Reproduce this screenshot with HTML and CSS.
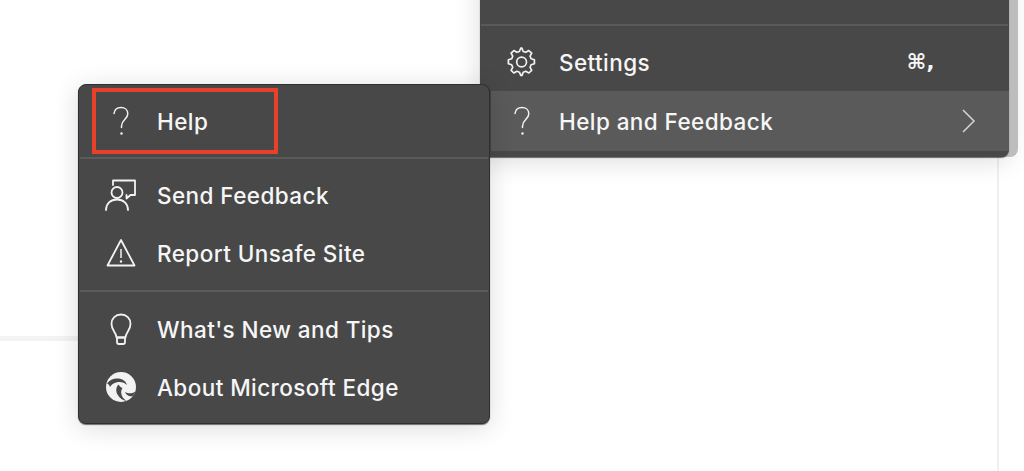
FILE: index.html
```html
<!DOCTYPE html>
<html lang="en">
<head>
<meta charset="utf-8">
<title>Help and Feedback menu</title>
<link rel="stylesheet" href="styles.css">
</head>
<body>
<div class="page-line"></div>
<div class="side-line"></div>

<div class="menu menu-main">
  <div class="group group-top"></div>
  <div class="divider"></div>
  <div class="group group-main">
    <div class="item">
      <svg class="icon" viewBox="0 0 34 34"><g fill="none" stroke="currentColor" stroke-width="1.7" stroke-linecap="round" stroke-linejoin="round"><path d="M17 3.200l1.200 3.300 2.600.8 3-1.700 2.900 2.600-1.600 3 1 2.500 3.300 1.100v3.900l-3.300 1.100-1 2.500 1.600 3-2.900 2.700-3-1.700-2.600.9-1.200 3.200h-1.200l-1.400-3.200-2.500-.9-3 1.700-2.800-2.700 1.600-3-1-2.500-3.300-1.100v-3.900l3.300-1.100 1-2.500-1.600-3 2.800-2.600 3 1.700 2.500-.8 1.400-3.300z"/><circle cx="16.600" cy="17" r="4.900"/></g></svg>
      <span class="label">Settings</span>
      <span class="shortcut">⌘,</span>
    </div>
    <div class="item item-active">
      <svg class="icon" viewBox="0 0 34 34"><g fill="none" stroke="currentColor" stroke-width="1.5" stroke-linecap="round"><path d="M10 9.500C10.500 5.500 13.500 3.500 17 3.500c4 0 6.800 2.600 6.800 6.200 0 5.800-6.300 6-6.300 12.300v1.500"/></g><circle cx="17.500" cy="29.500" r="1.200" fill="currentColor"/></svg>
      <span class="label">Help and Feedback</span>
      <svg class="chevron" viewBox="0 0 16 26"><path d="M2 2l11 11L2 24" fill="none" stroke="currentColor" stroke-width="1.5"/></svg>
    </div>
  </div>
</div>

<div class="menu menu-sub">
  <div class="group">
    <div class="item">
      <svg class="icon" viewBox="0 0 34 34"><g fill="none" stroke="currentColor" stroke-width="1.5" stroke-linecap="round"><path d="M10 9.500C10.500 5.500 13.500 3.500 17 3.500c4 0 6.800 2.600 6.800 6.200 0 5.800-6.300 6-6.300 12.300v1.500"/></g><circle cx="17.500" cy="29.500" r="1.200" fill="currentColor"/></svg>
      <span class="label">Help</span>
    </div>
  </div>
  <div class="divider"></div>
  <div class="group group-mid">
    <div class="item">
      <svg class="icon" viewBox="0 0 34 34"><g fill="none" stroke="currentColor" stroke-width="1.8" stroke-linecap="round" stroke-linejoin="round"><path d="M9 7V2.500h22V17h-4.500l-4 3.500V17"/><circle cx="13" cy="14.500" r="5.500"/><path d="M2 32c0-6.500 4.500-10.500 11-10.500S24 25.500 24 32"/></g></svg>
      <span class="label">Send Feedback</span>
    </div>
    <div class="item">
      <svg class="icon" viewBox="0 0 34 34"><g fill="none" stroke="currentColor" stroke-width="1.8" stroke-linejoin="round"><path d="M17 4L3.500 29.500h27z"/></g><path d="M17 13v9" stroke="currentColor" stroke-width="1.500"/><circle cx="17" cy="25.500" r="1.200" fill="currentColor"/></svg>
      <span class="label">Report Unsafe Site</span>
    </div>
  </div>
  <div class="divider"></div>
  <div class="group group-last">
    <div class="item">
      <svg class="icon" viewBox="0 0 34 34"><g fill="none" stroke="currentColor" stroke-width="1.800" stroke-linejoin="round" stroke-linecap="round"><path d="M12.500 25.500c0-5-5-7-5-13.500C7.500 6.500 11.500 2.500 17 2.500S26.500 6.500 26.500 12c0 6.500-5 8.500-5 13.500z"/><path d="M13 25.500h8V30a2 2 0 0 1-2 2h-4a2 2 0 0 1-2-2z"/></g></svg>
      <span class="label">What's New and Tips</span>
    </div>
    <div class="item">
      <svg class="icon" viewBox="0 0 34 34"><circle cx="17" cy="17" r="15" fill="currentColor"/><path d="M3 13.500C6 9.500 10 8 14.500 8.500c4.500.5 7.500 3 8.500 6.500-2.500-2.500-5.500-3.500-9-3-4 .6-6.500 2.500-8 5-.3-1.500-1.300-3-3-3.500z" fill="#484848"/><path d="M14.500 14.500c-2.500 2.500-3 6.500-1 10s5.500 6 9 6.500c-3-2-5-5-5.300-8-.2-1.800.3-3.500 1.300-5-1.500-.5-3-1.700-4-3.500z" fill="#484848"/><path d="M21 22c3 1.700 7 2 10.500-.5-.8 1.800-1.500 3-2.800 4.500-3.500.8-6.700-1-7.700-4z" fill="#484848"/></svg>
      <span class="label">About Microsoft Edge</span>
    </div>
  </div>
</div>

<div class="annotation"></div>
</body>
</html>
```

FILE: styles.css
```css
* {
  box-sizing: border-box;
}

html,
body {
  margin: 0;
  height: 471px;
  overflow: hidden;
  background: #ffffff;
}

body {
  position: relative;
  font-family: Inter, "Liberation Sans", sans-serif;
  color: #f6f6f6;
}

.page-line {
  position: absolute;
  left: 0;
  top: 336px;
  width: 90px;
  height: 5px;
  background: #f3f3f3;
}

.side-line {
  position: absolute;
  left: 997px;
  top: 150px;
  width: 2px;
  height: 321px;
  background: #f0f0f0;
}

.menu {
  position: absolute;
  background: #484848;
  box-shadow: 0 1px 1px rgba(0, 0, 0, 0.55), 0 4px 26px rgba(0, 0, 0, 0.14);
}

.menu-main {
  left: 480px;
  top: -40px;
  width: 529px;
  height: 197px;
  border-radius: 0 0 8px 8px;
  display: flex;
  flex-direction: column;
  box-shadow: 0 1px 1px rgba(0, 0, 0, 0.55), 9px 0 0 #bdbdbd, 0 4px 26px rgba(0, 0, 0, 0.14);
}

.menu-sub {
  left: 78px;
  top: 84px;
  width: 412px;
  height: 340px;
  border-radius: 8px;
  border: 1px solid #2f2f2f;
}

.group {
  padding: 7px 0;
}

.group-top {
  height: 64px;
  padding: 0;
}

.group-main {
  padding: 7px 0 0;
}

.group-mid {
  padding-bottom: 8px;
}

.group-last {
  padding-top: 8px;
}

.item {
  height: 58px;
  display: flex;
  align-items: center;
  padding: 0 27px 0 25px;
  font-size: 22.500px;
  font-weight: 500;
  letter-spacing: 0.42px;
}

.divider {
  height: 2px;
  margin: 0 1px;
  background: #5a5a5a;
}

.menu-main .item {
  padding-left: 25px;
}

.item-active {
  height: 60px;
  background: #5a5a5a;
  margin-left: 11px;
  padding-left: 14px;
}

.menu-main .item-active {
  padding-left: 14px;
  padding-right: 32px;
}

.icon {
  width: 34px;
  height: 34px;
  flex: none;
  color: #f2f2f2;
}

.label {
  margin-left: 19px;
  white-space: nowrap;
}

.menu-main .label {
  margin-left: 20px;
}

.shortcut {
  margin-left: auto;
  margin-right: 47px;
  font-family: "DejaVu Sans", sans-serif;
  font-size: 21px;
  font-weight: 700;
}

.chevron {
  width: 16px;
  height: 26px;
  margin-left: auto;
  color: #d4d4d4;
}

.annotation {
  position: absolute;
  left: 92px;
  top: 88px;
  width: 186px;
  height: 66px;
  border: 4px solid #e8412a;
}
```
